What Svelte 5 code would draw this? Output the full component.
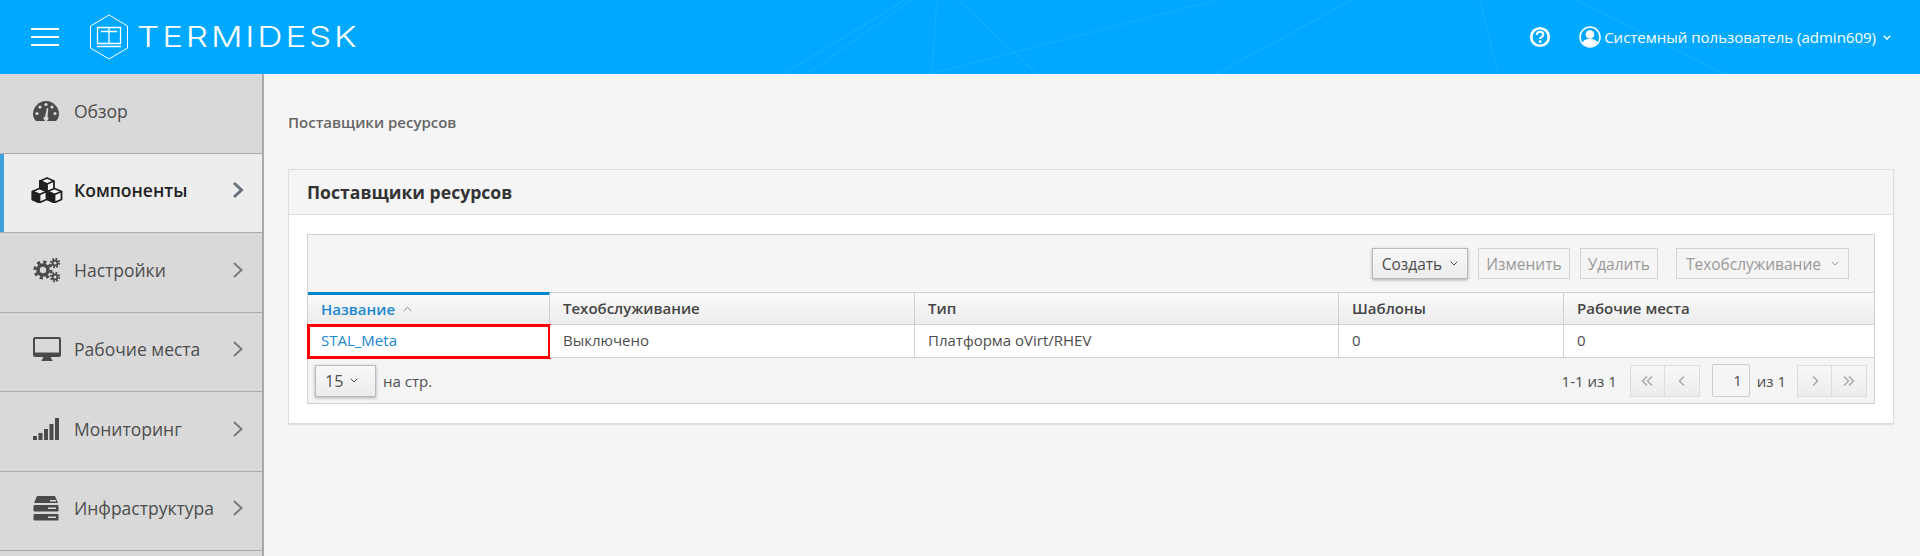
<script>
  const menu = [
    { id: 'gauge', label: 'Обзор' },
    { id: 'cubes', label: 'Компоненты', arrow: true, active: true },
    { id: 'cogs', label: 'Настройки', arrow: true },
    { id: 'desktop', label: 'Рабочие места', arrow: true },
    { id: 'signal', label: 'Мониторинг', arrow: true },
    { id: 'server', label: 'Инфраструктура', arrow: true }
  ]
  const columns = ['Название', 'Техобслуживание', 'Тип', 'Шаблоны', 'Рабочие места']
  const row = ['STAL_Meta', 'Выключено', 'Платформа oVirt/RHEV', '0', '0']
</script>

{#snippet caret(width = 1)}
  <svg class="caret" viewBox="0 0 8 5" width="8" height="5"><path d="M.7.7 4 4l3.3-3.3" fill="none" stroke="currentColor" stroke-width={width}/></svg>
{/snippet}

{#snippet pageArrow(d)}
  <svg viewBox="0 0 14 12" width="14" height="12"><path {d} fill="none" stroke="#a8a8a8" stroke-width="1.5"/></svg>
{/snippet}

<header class="topbar">
  <svg class="streaks" viewBox="0 0 1920 74" width="1920" height="74" aria-hidden="true">
    <path d="M905 0 783 74M912 0 807 74M937 0 932 74M958 0 1037 74M1217 0 930 74M1352 0 1216 74M1480 0 1498 74M1577 0 1725 74" stroke="#fff" stroke-opacity=".06" stroke-width="1.500" fill="none"/>
  </svg>
  <button class="burger" aria-label="Меню"><span></span><span></span><span></span></button>
  <div class="logo">
    <svg viewBox="0 0 40 46" width="40" height="46" fill="none" stroke="#fff">
      <path d="M20 1 38.5 12v22L20 45 1.500 34V12z"/>
      <path d="M8.500 13.500h23v16h-23zM20 13.500v16M12 17.500h16" stroke-width="1.300"/>
      <path d="M8 32.500h24" stroke-width="1.500"/>
    </svg>
    <span class="wordmark">TERMIDESK</span>
  </div>
  <div class="top-right">
    <svg viewBox="0 0 22 22" width="22" height="22">
      <circle cx="11" cy="11" r="8.800" fill="none" stroke="#fff" stroke-width="2.600"/>
      <path d="M7.800 9c0-4.300 6.500-4.300 6.500-.4 0 2.300-3.100 2.200-3.100 4.300" fill="none" stroke="#fff" stroke-width="2.200"/>
      <rect x="10" y="14.300" width="2.400" height="2.400" fill="#fff"/>
    </svg>
    <div class="user">
      <svg viewBox="0 0 22 22" width="22" height="22">
        <circle cx="11" cy="11" r="10" fill="none" stroke="#fff" stroke-width="1.500"/>
        <circle cx="11" cy="8.500" r="4.300" fill="#fff"/>
        <path d="M3.500 17c1-3.500 4-4 7.500-4s6.500.5 7.500 4c-2 2.500-4.500 3.500-7.500 3.500s-5.500-1-7.500-3.500z" fill="#fff"/>
      </svg>
      <span>Системный пользователь (admin609)</span>
      {@render caret(1.5)}
    </div>
  </div>
</header>

<div class="body">
  <nav class="sidebar">
    {#each menu as item}
      <div class="item" class:active={item.active}>
        <span class="icon">
          {#if item.id === 'gauge'}
            <svg viewBox="0 0 26 20" width="26" height="20">
              <path d="M3 20C.5 17.500 0 15 0 13 0 6 6 0 13 0s13 6 13 13c0 2-.5 4.500-3 7z" fill="#4a4a4a"/>
              <g fill="#d9d9d9"><circle cx="4" cy="12.500" r="1.600"/><circle cx="7" cy="6" r="1.600"/><circle cx="13" cy="3.500" r="1.600"/><circle cx="22" cy="12.500" r="1.600"/><circle cx="19" cy="6" r="1.600"/></g>
              <path d="M12 15.500 14 7l1.300.3-.8 8.500a2.300 2.300 0 1 1-2.500-.3z" fill="#d9d9d9"/>
            </svg>
          {:else if item.id === 'cubes'}
            <svg class="wide" viewBox="0 0 32 26" width="32" height="26" stroke="#1f1f1f" stroke-width="1.800" stroke-linejoin="round">
              <path d="M16 1 23 4v8l-7 3-7-3V4z" fill="#f4f4f4"/>
              <path d="M9 4l7 3 7-3" fill="none"/>
              <path d="M9 4v8l7 3V7z" fill="#1f1f1f"/>
              <path d="M8.500 11.500l7 3v8l-7 3-7-3v-8z" fill="#f4f4f4"/>
              <path d="M1.500 14.500l7 3 7-3" fill="none"/>
              <path d="M1.500 14.500v8l7 3v-8z" fill="#1f1f1f"/>
              <path d="M23.500 11.500l7 3v8l-7 3-7-3v-8z" fill="#f4f4f4"/>
              <path d="M16.500 14.500l7 3 7-3" fill="none"/>
              <path d="M16.500 14.500v8l7 3v-8z" fill="#1f1f1f"/>
            </svg>
          {:else if item.id === 'cogs'}
            <svg viewBox="0 0 28 26" width="28" height="26" fill="none" stroke="#4a4a4a">
              <circle cx="10" cy="13" r="5" stroke-width="3.600"/>
              <circle cx="10" cy="13" r="8" stroke-width="3" stroke-dasharray="3.200 3.080"/>
              <circle cx="22" cy="6" r="2.500" stroke-width="2"/>
              <circle cx="22" cy="6" r="4.300" stroke-width="1.800" stroke-dasharray="1.800 1.580"/>
              <circle cx="22" cy="20" r="2.500" stroke-width="2"/>
              <circle cx="22" cy="20" r="4.300" stroke-width="1.800" stroke-dasharray="1.800 1.580"/>
            </svg>
          {:else if item.id === 'desktop'}
            <svg viewBox="0 0 28 24" width="28" height="24">
              <path d="M2 0h24a2 2 0 0 1 2 2v16a2 2 0 0 1-2 2h-8c0 2 .5 2.500 1.500 3v1h-11v-1c1-.5 1.500-1 1.500-3H2a2 2 0 0 1-2-2V2a2 2 0 0 1 2-2z" fill="#4a4a4a"/>
              <rect x="2" y="2" width="24" height="13.500" fill="#d9d9d9"/>
            </svg>
          {:else if item.id === 'signal'}
            <svg viewBox="0 0 26 22" width="26" height="22" fill="#4a4a4a">
              <rect x="0" y="18" width="4" height="4"/><rect x="5.500" y="15" width="4" height="7"/><rect x="11" y="11" width="4" height="11"/><rect x="16.500" y="6" width="4" height="16"/><rect x="22" y="0" width="4" height="22"/>
            </svg>
          {:else}
            <svg viewBox="0 0 26 25" width="26" height="25" fill="#4a4a4a">
              <path d="M4 0h18l3 7H1z"/>
              <rect x="0.500" y="9" width="25" height="6.500" rx="1"/>
              <rect x="0.500" y="18" width="25" height="6.500" rx="1"/>
              <g fill="#d9d9d9"><rect x="15" y="11.500" width="8" height="1.500"/><rect x="15" y="20.500" width="8" height="1.500"/><rect x="17" y="4" width="6" height="1.500"/></g>
            </svg>
          {/if}
        </span>
        <span class="label">{item.label}</span>
        {#if item.arrow}
          <svg class="chev" viewBox="0 0 12 18" width="12" height="18"><path d="M2 2l7.500 7L2 16" fill="none" stroke={item.active ? '#68717c' : '#7a7a7a'} stroke-width={item.active ? 3 : 2}/></svg>
        {/if}
      </div>
    {/each}
  </nav>

  <main class="content">
    <div class="crumb">Поставщики ресурсов</div>
    <section class="panel">
      <h2>Поставщики ресурсов</h2>
      <div class="panel-body">
        <div class="grid">
          <div class="toolbar">
            <button class="btn raised">Создать {@render caret()}</button>
            <button class="btn">Изменить</button>
            <button class="btn">Удалить</button>
            <button class="btn maint">Техобслуживание {@render caret()}</button>
          </div>
          <div class="table">
            {#each columns as c, i}
              <div class="th" class:sorted={i === 0}>
                {c}
                {#if i === 0}
                  <svg viewBox="0 0 9 6" width="9" height="6"><path d="M.7 5 4.500 1.300 8.300 5" fill="none" stroke="#7a8a99" stroke-width="1"/></svg>
                {/if}
              </div>
            {/each}
            {#each row as v, i}
              <div class="td" class:marked={i === 0}>{v}</div>
            {/each}
          </div>
          <div class="pager">
            <button class="btn raised size">15 {@render caret()}</button>
            <span class="per">на стр.</span>
            <span class="count">1-1 из 1</span>
            <div class="pair">
              <button aria-label="Первая">{@render pageArrow('M7 1.500 2.500 6 7 10.500M12 1.500 7.500 6l4.500 4.500')}</button>
              <button aria-label="Назад">{@render pageArrow('M9 1.500 4.500 6 9 10.500')}</button>
            </div>
            <span class="page-input">1</span>
            <span class="of">из 1</span>
            <div class="pair">
              <button aria-label="Вперёд">{@render pageArrow('M5 1.500 9.500 6 5 10.500')}</button>
              <button aria-label="Последняя">{@render pageArrow('M2 1.500 6.500 6 2 10.500M7 1.500 11.500 6 7 10.500')}</button>
            </div>
          </div>
        </div>
      </div>
    </section>
  </main>
</div>

<style>
  :global(body) {
    margin: 0;
    background: #f5f5f5;
    font-family: "Open Sans", sans-serif;
    overflow: hidden;
  }
  button { font-family: inherit; }

  .topbar {
    position: relative;
    height: 74px;
    background: #00a9ff;
    display: flex;
    align-items: center;
    overflow: hidden;
    color: #fff;
  }
  .streaks { position: absolute; left: 0; top: 0; }
  .burger {
    background: none;
    border: 0;
    padding: 0;
    margin-left: 31px;
    width: 28px;
    display: flex;
    flex-direction: column;
    gap: 6px;
  }
  .burger span { display: block; height: 2px; background: #fff; }
  .logo {
    display: flex;
    align-items: center;
    margin-left: 30px;
    gap: 8px;
  }
  .wordmark {
    font-family: Inter, sans-serif;
    font-weight: 300;
    font-size: 28px;
    letter-spacing: 2.300px;
    line-height: 1;
    color: #fff;
    transform: scaleX(1.25);
    transform-origin: left center;
  }
  .top-right {
    margin-left: auto;
    display: flex;
    align-items: center;
    padding-right: 29px;
    gap: 28px;
  }
  .user {
    display: flex;
    align-items: center;
    gap: 3px;
    font-size: 15px;
  }
  .user .caret { margin-left: 4px; }

  .body { display: flex; height: 482px; }
  .sidebar {
    width: 262px;
    flex: none;
    background: #d9d9d9;
    border-right: 2px solid #aaa;
    box-sizing: content-box;
  }
  .item {
    height: 73.500px;
    padding: 0 18px 5px 31px;
    border-bottom: 1px solid #aaa;
    display: flex;
    align-items: center;
    color: #4d4d4d;
    font-size: 17.500px;
    box-sizing: content-box;
  }
  .item.active {
    background: #ededed;
    color: #222;
    font-weight: 600;
    box-shadow: inset 4px 0 0 #3fa0dc;
  }
  .icon { width: 43px; flex: none; display: flex; align-items: center; }
  .icon svg { margin-left: 2px; }
  .icon svg.wide { margin-left: 0; }
  .label { flex: 1; }

  .content { flex: 1; padding: 0 26px 0 24px; color: #4d4d4d; }
  .crumb { margin-top: 39px; height: 56px; font-size: 15px; font-weight: 600; line-height: 18px; color: #666; }
  .panel {
    background: #fff;
    border: 1px solid #dcdcdc;
    box-shadow: 0 1px 1px rgba(0,0,0,.08);
  }
  h2 {
    margin: 0;
    height: 44px;
    padding: 0 18px;
    background: #f5f5f5;
    border-bottom: 1px solid #dcdcdc;
    font-size: 17.600px;
    font-weight: 700;
    line-height: 44px;
    color: #333;
  }
  .panel-body { padding: 19px 18px 19px; }
  .grid { border: 1px solid #d0d0d0; background: #f5f5f5; }
  .toolbar {
    height: 57px;
    display: flex;
    align-items: center;
    justify-content: flex-end;
    padding-right: 25px;
    gap: 10px;
  }
  .btn {
    height: 31px;
    border: 1px solid #d5d5d5;
    background: #f5f5f5;
    color: #999;
    font-size: 15.500px;
    padding: 0 7px;
    display: flex;
    align-items: center;
    gap: 8px;
  }
  .btn.raised {
    color: #4d4d4d;
    border-color: #bbb;
    background: linear-gradient(#f8f8f8, #ececec);
    box-shadow: 0 1px 3px rgba(0,0,0,.3);
    padding: 0 9px;
  }
  .btn.maint { margin-left: 8px; gap: 10px; padding: 0 9px; }
  .table { display: grid; grid-template-columns: 242px 365px 424px 225px 1fr; }
  .th, .td {
    box-sizing: border-box;
    padding: 0 13px 2px;
    font-size: 15px;
    display: flex;
    align-items: center;
    border-right: 1px solid #d0d0d0;
    color: #4d4d4d;
  }
  .th:nth-child(5n), .td:nth-child(5n) { border-right: 0; }
  .th {
    height: 33px;
    font-weight: 600;
    border-top: 1px solid #d0d0d0;
    border-bottom: 1px solid #d0d0d0;
    background: linear-gradient(#fafafa, #ececec);
    color: #444;
    gap: 8px;
  }
  .th.sorted { color: #1a87d0; border-top: 3px solid #0088ce; }
  .td {
    height: 33px;
    background: #fff;
    border-bottom: 1px solid #d0d0d0;
  }
  .td.marked {
    color: #1a87d0;
    outline: 3px solid #f00;
    outline-offset: -2px;
  }
  .pager {
    height: 45px;
    display: flex;
    align-items: center;
    padding: 0 7px;
    font-size: 15px;
    color: #4d4d4d;
  }
  .size { color: #4d4d4d; padding: 0 10px 0 8px; width: 61px; height: 32px; box-sizing: border-box; gap: 7px; font-size: 16px; }
  .per { margin-left: 7px; }
  .count { margin-left: auto; margin-right: 13px; }
  .pair { display: flex; }
  .pair button {
    width: 35px;
    height: 32px;
    padding: 0;
    border: 1px solid #dcdcdc;
    background: linear-gradient(#f8f8f8, #ececec);
    display: flex;
    align-items: center;
    justify-content: center;
  }
  .pair button + button { border-left: 0; }
  .page-input {
    box-sizing: border-box;
    margin-left: 12px;
    width: 38px;
    height: 33px;
    border: 1px solid #ccc;
    border-radius: 2px;
    background: #f5f5f5;
    text-align: right;
    padding-right: 7px;
    line-height: 31px;
  }
  .of { margin: 0 11px 0 7px; }
</style>
